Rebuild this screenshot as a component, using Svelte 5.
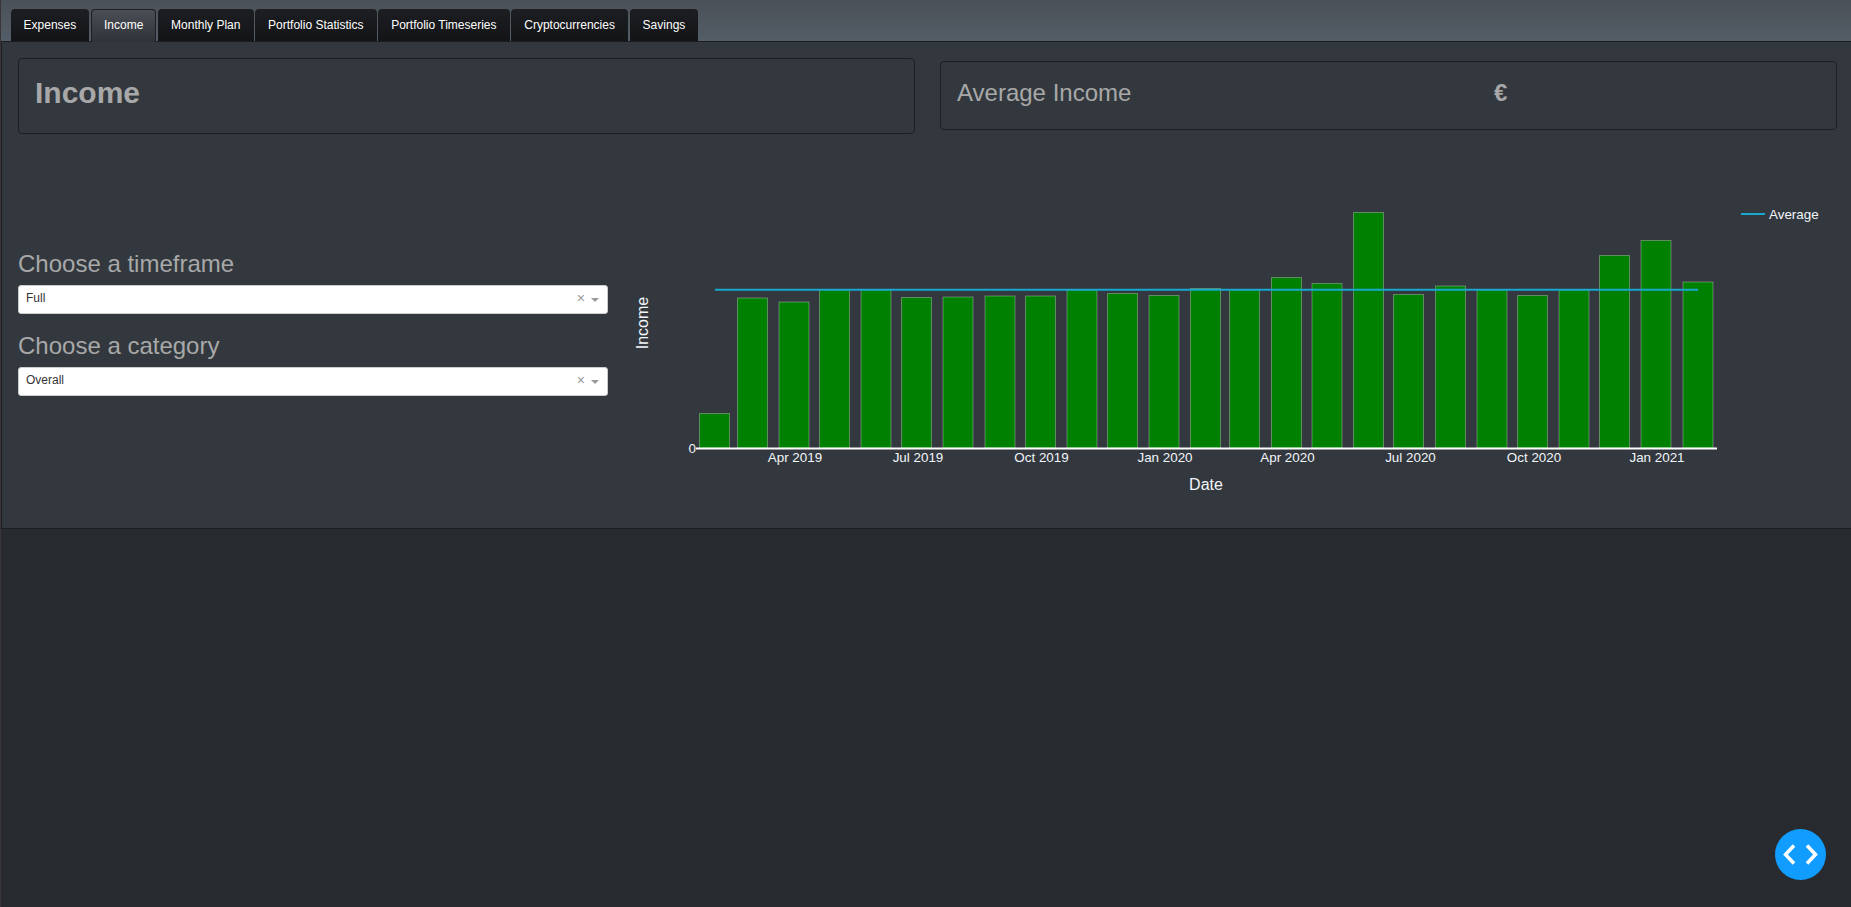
<script>
  const tabs = [
    "Expenses",
    "Income",
    "Monthly Plan",
    "Portfolio Statistics",
    "Portfolio Timeseries",
    "Cryptocurrencies",
    "Savings",
  ];
  const activeTab = "Income";

  const filters = [
    { label: "Choose a timeframe", value: "Full" },
    { label: "Choose a category", value: "Overall" },
  ];

  // left edge and top of each monthly bar, in chart coordinates
  const bars = [
    [699.5, 413.5], [737.5, 298], [779, 302], [819.5, 290], [861, 290],
    [901.5, 297.5], [943, 297], [985, 296], [1025.5, 296], [1067, 290],
    [1107.5, 293.5], [1149, 295.5], [1190.5, 288.5], [1229.5, 290], [1271.5, 277.5],
    [1312, 283.5], [1353.5, 212.5], [1393.5, 294.5], [1435.5, 286], [1477, 290],
    [1517.5, 295.5], [1559, 290], [1599.5, 255.5], [1641, 240.5], [1683, 282],
  ];
  const baseline = 448;
  const barWidth = 30;

  const ticks = [
    { x: 795, label: "Apr 2019" },
    { x: 918, label: "Jul 2019" },
    { x: 1041.5, label: "Oct 2019" },
    { x: 1165, label: "Jan 2020" },
    { x: 1287.5, label: "Apr 2020" },
    { x: 1410.5, label: "Jul 2020" },
    { x: 1534, label: "Oct 2020" },
    { x: 1657, label: "Jan 2021" },
  ];
</script>

<div class="page">
  <ul class="tabs">
    {#each tabs as tab}
      <li class="tab" class:active={tab === activeTab}>{tab}</li>
    {/each}
  </ul>

  <section class="panel">
    <div class="headers">
      <div class="card title-card"><h1>Income</h1></div>
      <div class="card average-card">
        <h2>Average Income</h2>
        <span class="amount">€</span>
      </div>
    </div>

    <div class="body-row">
      <div class="filters">
        {#each filters as filter}
          <div class="filter-label">{filter.label}</div>
          <div class="select">
            <span class="select-value">{filter.value}</span>
            <span class="select-clear">×</span>
            <span class="select-arrow"></span>
          </div>
        {/each}
      </div>

      <svg class="chart" viewBox="620 140 1231 380" width="1231" height="380">
        {#each bars as [x, top]}
          <rect class="bar" x={x} y={top} width={barWidth} height={baseline - top} />
        {/each}
        <line class="axis" x1="696" x2="1717" y1="448.5" y2="448.5" />
        <line class="average" x1="715" x2="1698" y1="289.7" y2="289.7" />

        <text class="tick" x="696" y="453" text-anchor="end">0</text>
        {#each ticks as tick}
          <text class="tick" x={tick.x} y="462" text-anchor="middle">{tick.label}</text>
        {/each}
        <text class="axis-title" x="1206" y="490" text-anchor="middle">Date</text>
        <text class="axis-title" transform="translate(648 323) rotate(-90)" text-anchor="middle">Income</text>

        <line class="average" x1="1741" x2="1765" y1="214" y2="214" />
        <text class="tick" x="1769" y="219">Average</text>
      </svg>
    </div>
  </section>

  <button class="float-button" aria-label="Toggle code view">
    <svg viewBox="0 0 51 51" width="51" height="51">
      <path d="M19 16.5 L10.5 25.5 L19 34.5 M32 16.5 L40.5 25.5 L32 34.5" />
    </svg>
  </button>
</div>

<style>
  :global(body) {
    margin: 0;
    background: #272b30;
    font-family: "Liberation Sans", Arial, sans-serif;
  }

  .page {
    min-height: 907px;
    background: #272b30;
    border-left: 1px solid #3a3338;
    box-sizing: border-box;
  }

  .tabs {
    display: flex;
    gap: 1.5px;
    margin: 0;
    padding: 9px 0 0 9.5px;
    height: 42px;
    box-sizing: border-box;
    list-style: none;
    background: linear-gradient(#4a5057, #545e68);
    border-bottom: 1px solid #1c1e22;
  }

  .tab {
    padding: 0 13.1px;
    height: 32px;
    line-height: 32px;
    font-size: 12px;
    color: #fff;
    background: linear-gradient(#1c1e22, #121416);
    border-radius: 4px 4px 0 0;
  }

  .tab.active {
    background: linear-gradient(#4a4f55, #2f3339);
    border: 1px solid #1c1e22;
    border-bottom: 0;
    padding: 0 12.1px;
    line-height: 30px;
  }

  .panel {
    height: 487px;
    box-sizing: border-box;
    background: #32383e;
    border-left: 1px solid #1c1e22;
    border-bottom: 1px solid #1c1e22;
    padding: 16px 14px 0 16px;
  }

  .headers {
    display: flex;
    align-items: flex-start;
    gap: 25px;
  }

  .card {
    border: 1px solid #1c1e22;
    border-radius: 4px;
    box-sizing: border-box;
    color: #a8a8a8;
  }

  .title-card {
    width: 898px;
    height: 76px;
    padding: 0 16px 7px;
    display: flex;
    align-items: center;
  }

  .title-card h1 {
    margin: 0;
    font-size: 30px;
    font-weight: 700;
  }

  .average-card {
    width: 898px;
    height: 69px;
    margin-top: 3px;
    padding: 0 16px 6px;
    display: flex;
    align-items: center;
  }

  .average-card h2 {
    margin: 0;
    width: 537px;
    font-size: 24px;
    font-weight: 400;
  }

  .amount {
    font-size: 24px;
    font-weight: 700;
  }

  .body-row {
    display: flex;
    margin-top: 6px;
  }

  .filters {
    width: 590px;
    padding-top: 106px;
    flex: none;
  }

  .filter-label {
    height: 35px;
    line-height: 35px;
    font-size: 24px;
    color: #a8a8a8;
  }

  .select {
    display: flex;
    align-items: center;
    height: 29px;
    margin: 4px 0 14px;
    padding: 0 8px 3px 7px;
    box-sizing: border-box;
    background: #fff;
    border: 1px solid #ccc;
    border-radius: 3px;
    font-size: 12px;
    color: #333;
  }

  .select-value {
    flex: 1;
  }

  .select-clear {
    color: #999;
    font-size: 14px;
    margin-right: 6px;
  }

  .select-arrow {
    width: 0;
    height: 0;
    margin-top: 3px;
    border: 4px solid transparent;
    border-top-color: #999;
    border-bottom: 0;
  }

  .chart {
    display: block;
    flex: none;
    margin-left: 12px;
    overflow: visible;
  }

  .bar {
    fill: #008000;
    stroke: rgba(255, 255, 255, 0.3);
    stroke-width: 1;
  }

  .axis {
    stroke: #fff;
    stroke-width: 2;
  }

  .average {
    stroke: #19a6cf;
    stroke-width: 2;
  }

  .tick {
    fill: #f2f5fa;
    font-size: 13.4px;
  }

  .axis-title {
    fill: #f2f5fa;
    font-size: 16px;
  }

  .float-button {
    position: fixed;
    right: 25px;
    bottom: 27px;
    width: 51px;
    height: 51px;
    padding: 0;
    border: 0;
    border-radius: 50%;
    background: #119dff;
  }

  .float-button svg {
    display: block;
  }

  .float-button path {
    fill: none;
    stroke: #fff;
    stroke-width: 3.5;
  }
</style>
